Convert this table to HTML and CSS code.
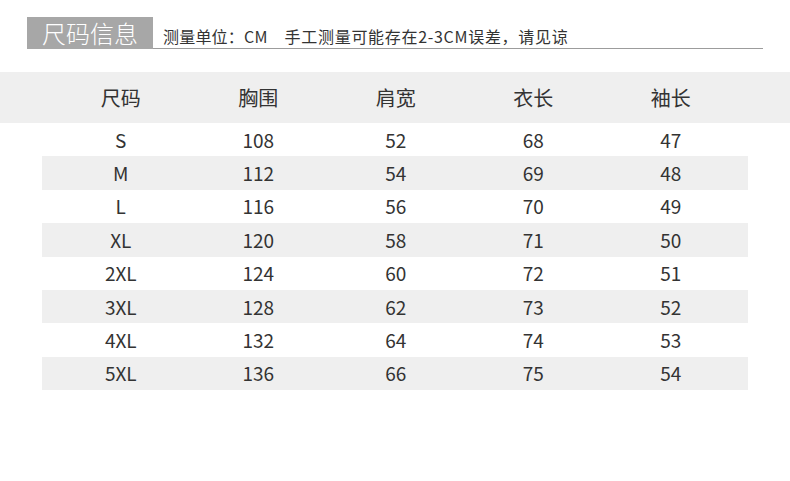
FILE: index.html
```html
<!DOCTYPE html>
<html lang="zh">
<head>
<meta charset="utf-8">
<title>尺码信息</title>
<link rel="stylesheet" href="styles.css">
</head>
<body>
<div class="top">
  <div class="title">尺码信息</div>
  <div class="sub"><span class="unit">测量单位：CM</span><span class="note">手工测量可能存在2-3CM误差，请见谅</span></div>
</div>
<div class="head">
  <div class="grid">
    <span>尺码</span><span>胸围</span><span>肩宽</span><span>衣长</span><span>袖长</span>
  </div>
</div>
<div class="rows">
  <div class="row grid"><span>S</span><span>108</span><span>52</span><span>68</span><span>47</span></div>
  <div class="row grid"><span>M</span><span>112</span><span>54</span><span>69</span><span>48</span></div>
  <div class="row grid"><span>L</span><span>116</span><span>56</span><span>70</span><span>49</span></div>
  <div class="row grid"><span>XL</span><span>120</span><span>58</span><span>71</span><span>50</span></div>
  <div class="row grid"><span>2XL</span><span>124</span><span>60</span><span>72</span><span>51</span></div>
  <div class="row grid"><span>3XL</span><span>128</span><span>62</span><span>73</span><span>52</span></div>
  <div class="row grid"><span>4XL</span><span>132</span><span>64</span><span>74</span><span>53</span></div>
  <div class="row grid"><span>5XL</span><span>136</span><span>66</span><span>75</span><span>54</span></div>
</div>
</body>
</html>
```
FILE: styles.css
```css
html, body {
  margin: 0;
  padding: 0;
  background: #fff;
}
body {
  font-family: "Noto Sans CJK SC", "Noto Sans", sans-serif;
  color: #333;
}
.top {
  display: flex;
  align-items: flex-end;
  padding: 17px 27px 0 27px;
}
.title {
  width: 126px;
  height: 32px;
  background: #a7a7a7;
  color: #fff;
  font-size: 24px;
  font-weight: 300;
  line-height: 32px;
  text-align: center;
}
.sub {
  flex: 1;
  height: 32px;
  box-sizing: border-box;
  padding: 9px 0 0 10px;
  font-size: 16px;
  line-height: 20px;
  color: #333;
  border-bottom: 1px solid #9c9c9c;
  white-space: nowrap;
}
.unit {
  letter-spacing: 0.2px;
}
.note {
  margin-left: 17px;
  letter-spacing: 0.7px;
}
.head {
  margin-top: 23px;
  height: 51px;
  background: #efefef;
  padding-left: 52px;
  display: flex;
  align-items: center;
  font-size: 20px;
}
.grid {
  display: grid;
  grid-template-columns: repeat(5, 137.5px);
  text-align: center;
}
.rows {
  margin: 0 42px;
}
.row {
  height: 33.4px;
  padding-left: 10px;
  align-items: center;
  font-size: 19px;
  line-height: 24px;
}
.row:nth-child(even) {
  background: #efefef;
}
```
